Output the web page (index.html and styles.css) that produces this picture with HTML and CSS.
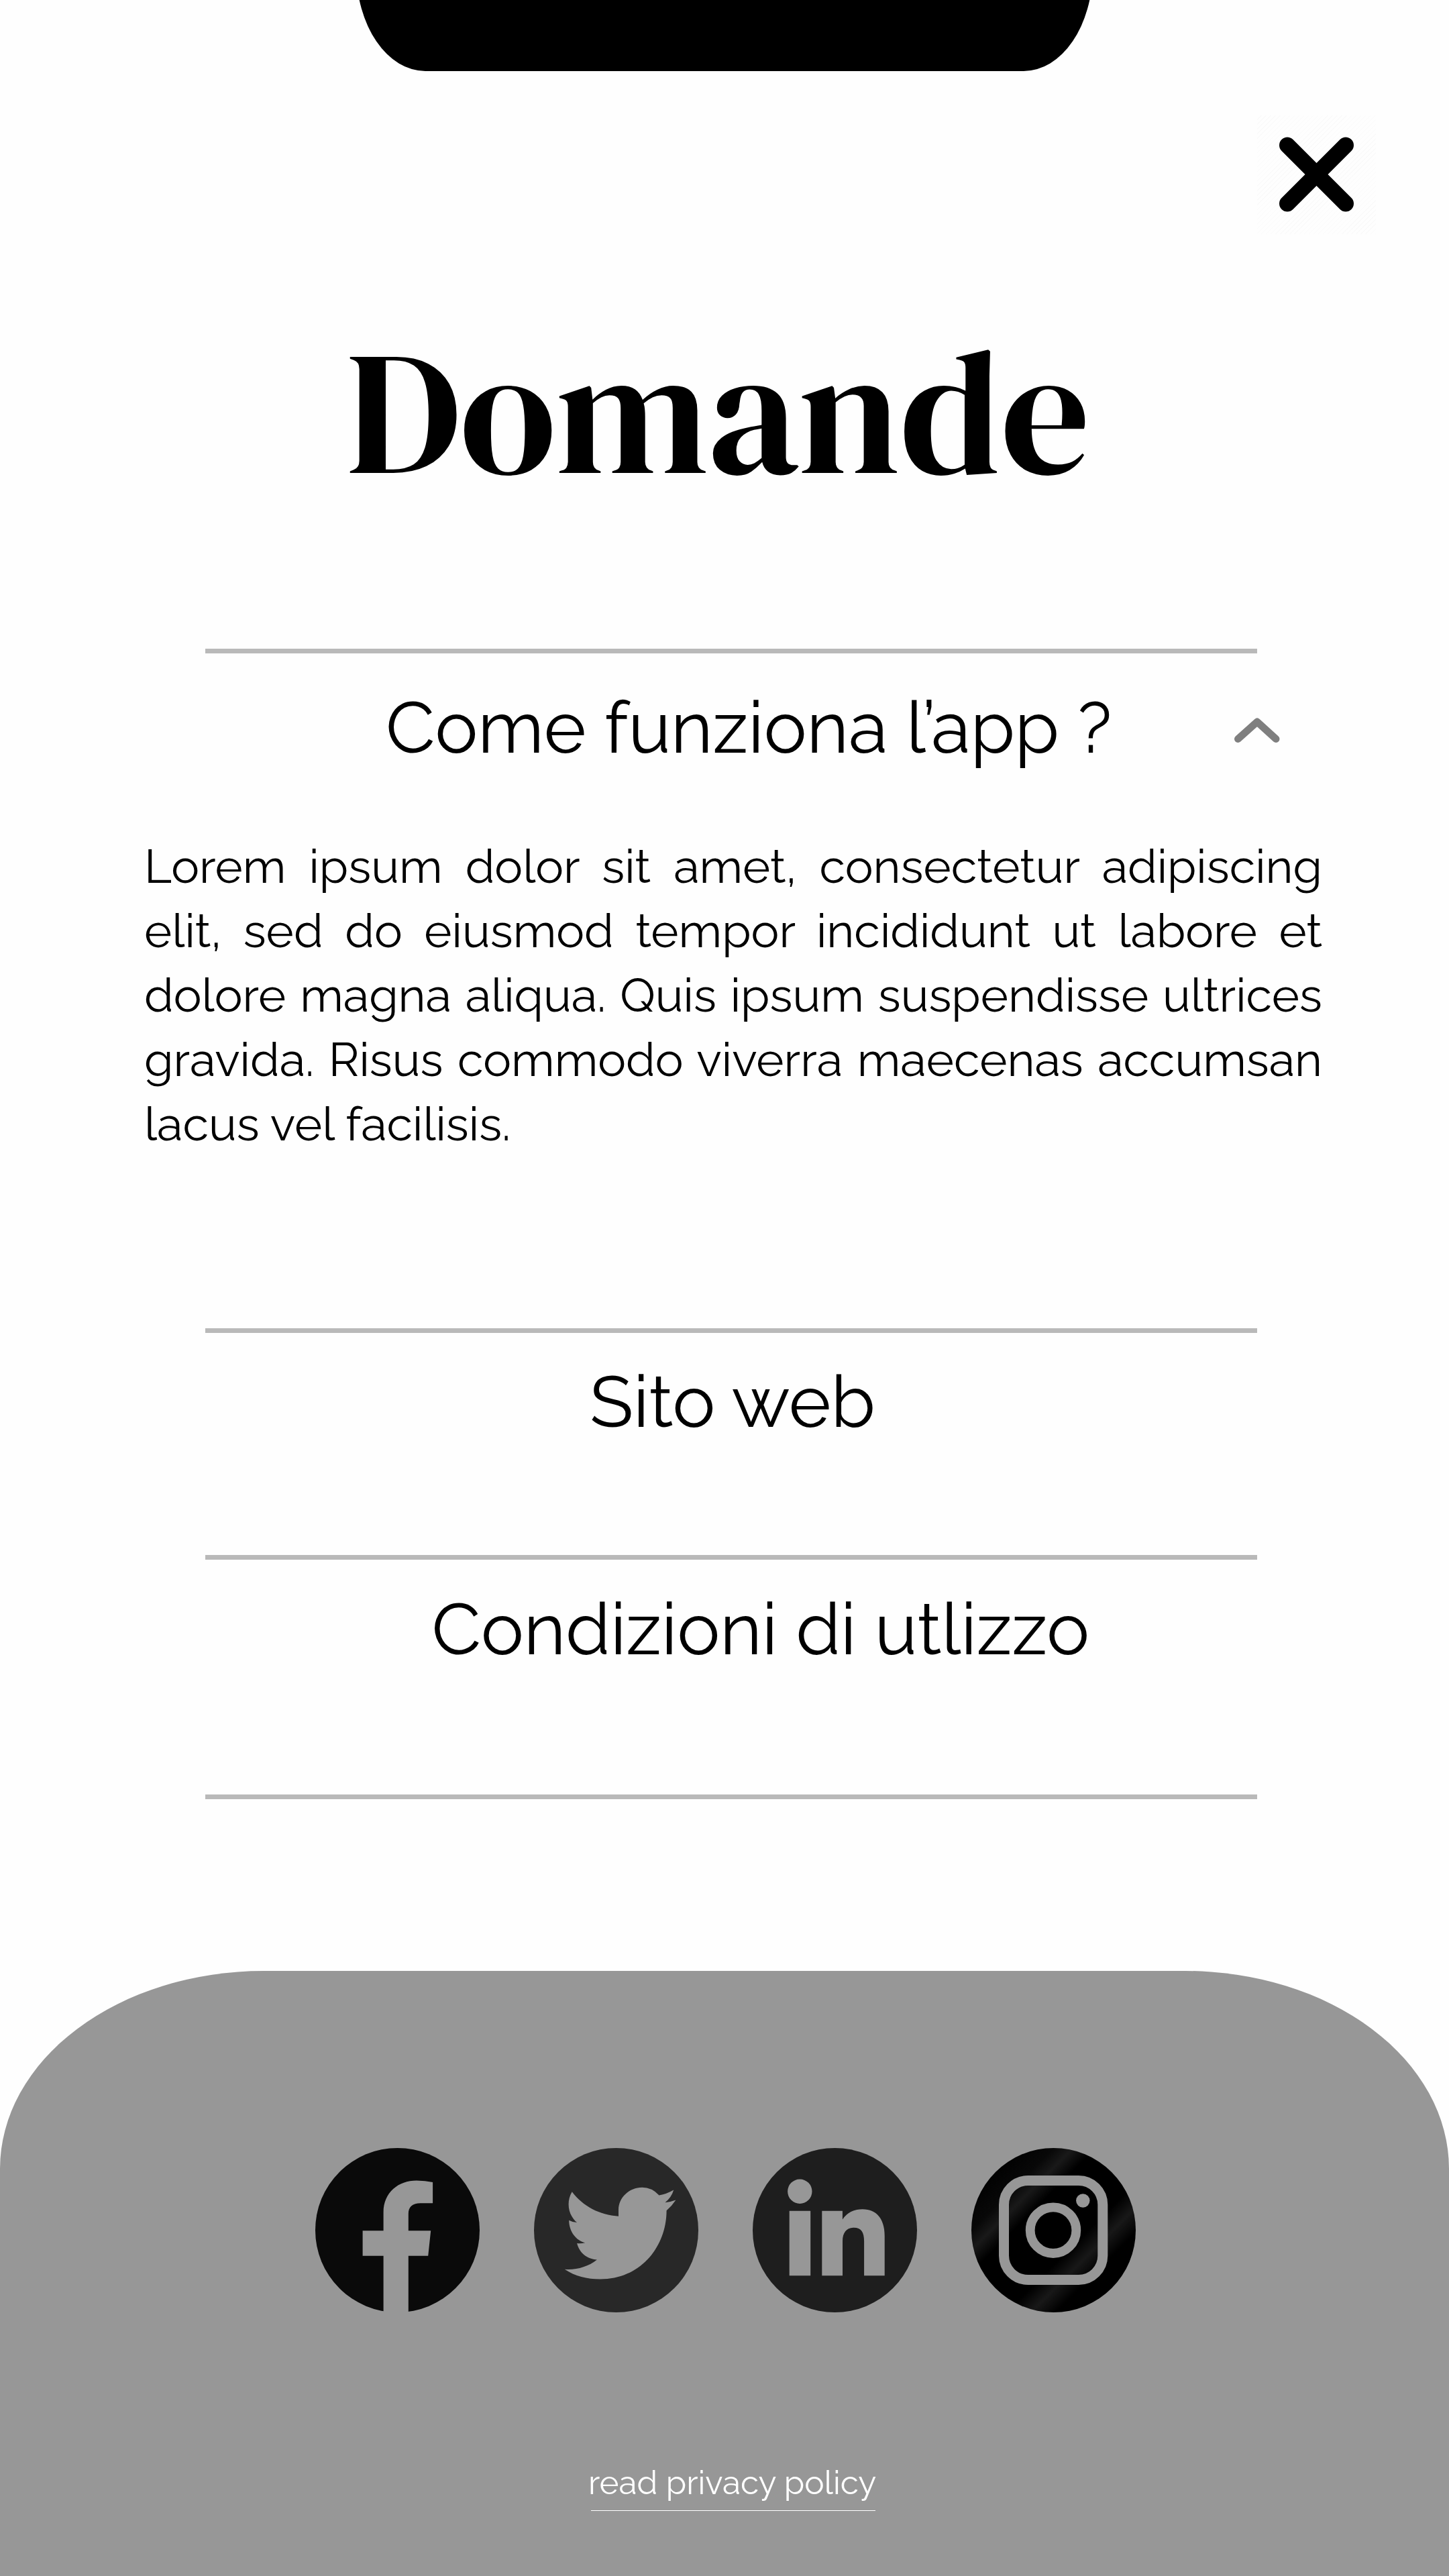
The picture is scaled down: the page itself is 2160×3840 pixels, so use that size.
FILE: index.html
```html
<!DOCTYPE html>
<html lang="it">
<head>
<meta charset="utf-8">
<title>Domande</title>
<link rel="stylesheet" href="styles.css">
</head>
<body>
<div class="screen">
  <header class="top">
    <div class="notch"></div>
    <button class="close" aria-label="Chiudi">
      <svg viewBox="0 0 177 177" width="177" height="177"><path d="M45 44.500L132 131.500M132 44.500L45 131.500" fill="none" stroke="#000" stroke-width="24" stroke-linecap="round"/></svg>
    </button>
  </header>

  <main class="faq">
    <h1 class="title">Domande</h1>

    <section class="item item-open">
      <div class="question">
        <h2 class="label label-app">Come funziona l’app ?</h2>
        <svg class="chevron" viewBox="0 0 68 38" width="68" height="38"><path d="M5.500 31.500L34 6L62 31.500" fill="none" stroke="#7f7f7f" stroke-width="11" stroke-linecap="round" stroke-linejoin="round"/></svg>
      </div>
      <p class="answer">Lorem ipsum dolor sit amet, consectetur adipiscing elit, sed do eiusmod tempor incididunt ut labore et dolore magna aliqua. Quis ipsum suspendisse ultrices gravida. Risus commodo viverra maecenas accumsan lacus vel facilisis.</p>
    </section>

    <section class="item item-site">
      <h2 class="label label-site">Sito web</h2>
    </section>

    <section class="item item-terms">
      <h2 class="label label-terms">Condizioni di utlizzo</h2>
    </section>
    <div class="item"></div>
  </main>

  <footer class="footer">
    <nav class="social">
      <svg viewBox="0 0 245 245" width="245" height="245">
        <circle cx="122.500" cy="122.500" r="122.500" fill="#0a0a0a"/>
        <path fill="#979797" d="M101.600 245V160.700H70.600V123.300H101.600V96C101.600 66 124 48.500 151 48.500Q164 48.500 175.100 51V82.300H157C145 82.300 138.800 88 138.800 98V123.300H172.200L168.200 160.700H138.800V246H101.600Z"/>
      </svg>
      <svg viewBox="0 0 245 245" width="245" height="245">
        <circle cx="122.500" cy="122.500" r="122.500" fill="#282828"/>
        <path fill="#979797" d="M45.700 180.700C61 191 79 195.500 98.800 195.500C160 195.500 197.600 146 197.600 93.300Q205.500 86.500 211.400 77.500Q203.500 80.500 195.500 81.300Q205 73.500 208.200 62.500Q198 68.500 186.500 70.500Q176 58.700 161.200 58.700C142 58.700 126 74 126 92V101.700C98 100 73 87 56.700 65.300C47 82 52 101 64 111Q57 110.500 52.200 107.700C52.200 124 62 137.500 76.300 141.300Q70 142.800 64.100 142C67.500 156 79 165.500 93.900 166.500C80 177.500 63 182 45.700 180.700Z"/>
      </svg>
      <svg viewBox="0 0 245 245" width="245" height="245">
        <circle cx="122.500" cy="122.500" r="122.500" fill="#1e1e1e"/>
        <circle cx="70.300" cy="64.700" r="18.200" fill="#979797"/>
        <path fill="#979797" d="M54.700 93.700H86.200V190.300H54.700ZM103.300 93.700H133.900V106.500Q144 91.300 163.700 91.300C185 91.300 196.700 106 196.700 131V190.300H166.100V139C166.100 125 161.500 118.700 151 118.700C140 118.700 134 126 134 139V190.300H103.300Z"/>
      </svg>
      <svg viewBox="0 0 245 245" width="245" height="245">
        <defs>
          <linearGradient id="sheen" gradientUnits="userSpaceOnUse" x1="30" y1="30" x2="215" y2="215">
            <stop offset="0" stop-color="#000"/>
            <stop offset=".17" stop-color="#080808"/>
            <stop offset=".25" stop-color="#191919"/>
            <stop offset=".34" stop-color="#000"/>
            <stop offset=".64" stop-color="#000"/>
            <stop offset=".74" stop-color="#181818"/>
            <stop offset=".84" stop-color="#000"/>
          </linearGradient>
        </defs>
        <circle cx="122.500" cy="122.500" r="122.500" fill="url(#sheen)"/>
        <g fill="none" stroke="#979797">
          <rect x="48.500" y="48.500" width="147.300" height="148" rx="36" stroke-width="15"/>
          <circle cx="122" cy="122.700" r="34.300" stroke-width="13.800"/>
        </g>
        <circle cx="166.300" cy="78.500" r="10.200" fill="#979797"/>
      </svg>
    </nav>
    <a class="privacy">read privacy policy</a>
  </footer>
</div>
</body>
</html>
```
FILE: styles.css
```css
* {
  box-sizing: border-box;
  margin: 0;
  padding: 0;
}

body {
  background: #fefefe;
  color: #000;
  font-family: Raleway, Lato, "Open Sans", sans-serif;
}

.screen {
  display: flex;
  flex-direction: column;
  width: 2160px;
  height: 3840px;
  overflow: hidden;
}

.top {
  display: flex;
  flex-direction: column;
  height: 463.5px;
}

.notch {
  align-self: center;
  width: 1098px;
  height: 151px;
  margin-top: -45px;
  border-radius: 0 0 103px 103px / 0 0 151px 151px;
  background: #000;
}

.close {
  align-self: flex-end;
  width: 177px;
  height: 177px;
  margin: 66px 109px 0 0;
  border: 0;
  background: repeating-linear-gradient(135deg, #fefefe 0 4px, #fafafa 4px 5px);
}

.close svg,
.social svg {
  display: block;
}

.faq {
  height: 2474.5px;
}

.title {
  height: 503.5px;
  padding-left: 516px;
  font: 400 262px/300px "DM Serif Display", "Liberation Serif", serif;
}

.item::before {
  content: "";
  display: block;
  height: 7px;
  margin: 0 286px 0 306px;
  background: #b9b9b9;
}

.item-open {
  height: 1013px;
}

.item-site {
  height: 338px;
}

.item-terms {
  height: 357px;
}

.question {
  display: flex;
  justify-content: space-between;
  padding: 47px 252px 0 575px;
}

.chevron {
  margin-top: 49px;
}

.label {
  font-size: 107.2px;
  font-weight: 400;
  line-height: 126px;
  white-space: nowrap;
}

.label-site {
  padding: 39px 0 0 879px;
}

.label-terms {
  padding: 40px 0 0 643.5px;
}

.answer {
  width: 1756px;
  margin: 96px 0 0 215px;
  font-size: 70.3px;
  line-height: 96px;
  text-align: justify;
}

.footer {
  display: flex;
  flex-direction: column;
  align-items: center;
  flex: 1;
  border-radius: 393px 393px 0 0 / 295px 295px 0 0;
  background: #979797;
}

.social {
  display: flex;
  gap: 81.3px;
  margin: 264px 0 0 3px;
}

.privacy {
  width: 424px;
  height: 72px;
  margin: 224px 0 0 26px;
  border-bottom: 1px solid #fff;
  color: #fff;
  font-size: 49.4px;
  line-height: 60px;
  text-indent: -4px;
  white-space: nowrap;
}
```
